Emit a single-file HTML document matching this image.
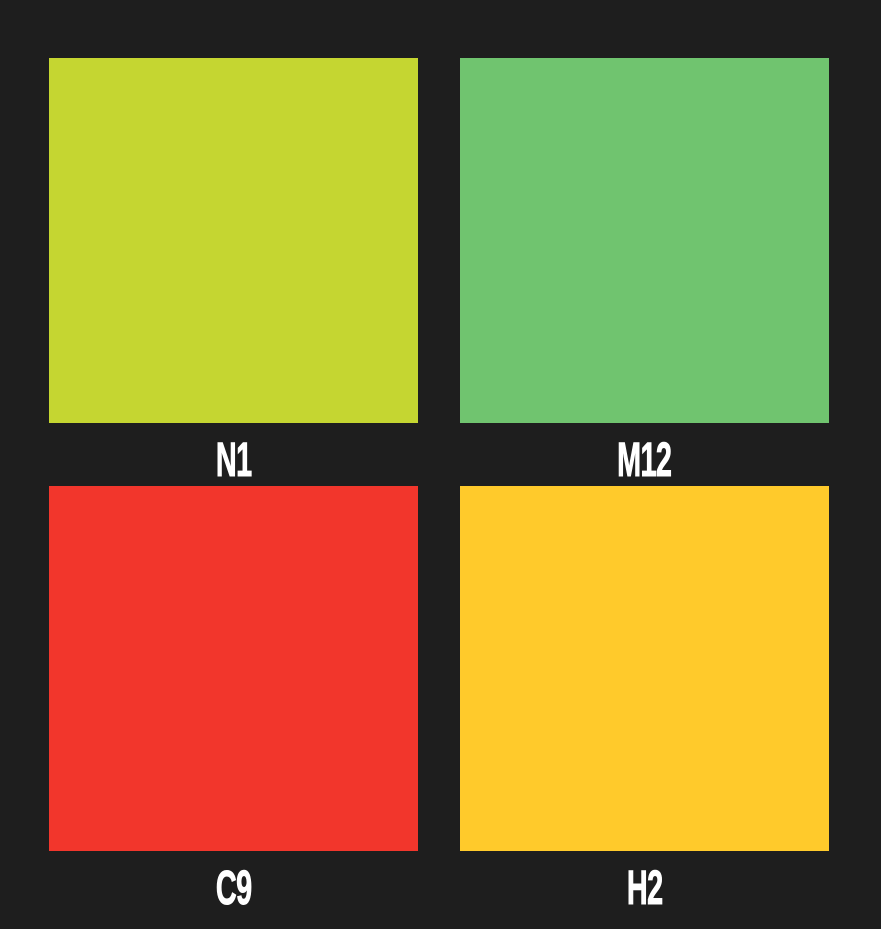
<!DOCTYPE html>
<html><head><style>
html,body{margin:0;padding:0;background:#1e1e1e;width:881px;height:929px;overflow:hidden}
.sq{position:absolute;width:369px;height:365px}
.lb{position:absolute;width:369px;text-align:center;color:#fff;font-family:"Liberation Sans",sans-serif;font-weight:bold;font-size:48px;line-height:48px}
.lb span{display:inline-block;transform:scaleX(0.6);letter-spacing:-1px;-webkit-text-stroke:1px #fff}
</style></head><body>
<div class="sq" style="left:49px;top:58px;background:#c5d631"></div>
<div class="sq" style="left:460px;top:58px;background:#70c46f"></div>
<div class="sq" style="left:49px;top:486px;background:#f2362c"></div>
<div class="sq" style="left:460px;top:486px;background:#ffca2b"></div>
<div class="lb" style="left:49px;top:437px"><span>N1</span></div>
<div class="lb" style="left:460px;top:437px"><span>M12</span></div>
<div class="lb" style="left:49px;top:865px"><span>C9</span></div>
<div class="lb" style="left:460px;top:865px"><span>H2</span></div>
</body></html>
